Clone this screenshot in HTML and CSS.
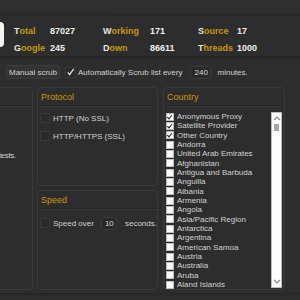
FILE: index.html
```html
<!DOCTYPE html>
<html>
<head>
<meta charset="utf-8">
<link rel="stylesheet" href="styles.css">
</head>
<body>
<div class="app">
  <div class="topbar"><div class="tabline"></div></div>
  <div class="stats">
    <div class="logo"></div>
    <div class="grid">
      <span class="lbl"><b>T</b>otal</span><span class="val">87027</span>
      <span class="lbl"><b>W</b>orking</span><span class="val">171</span>
      <span class="lbl"><b>S</b>ource</span><span class="val">17</span>
      <span class="lbl"><b>G</b>oogle</span><span class="val">245</span>
      <span class="lbl"><b>D</b>own</span><span class="val">86611</span>
      <span class="lbl"><b>T</b>hreads</span><span class="val">1000</span>
    </div>
  </div>
  <div class="toolbar">
    <button class="btn">Manual scrub</button>
    <span class="tcheck"><svg width="10" height="10" viewBox="0 0 10 10"><path d="M2 5.5 L4 8 L8.5 1.5" fill="none" stroke="#e8e8e8" stroke-width="1.3"/></svg></span>
    <span class="txt">Automatically Scrub list every</span>
    <span class="inp w240">240</span>
    <span class="txt">minutes.</span>
  </div>
  <div class="panels">
    <div class="panel leftp">
      <div class="phead"></div>
      <div class="lefttext">tests.</div>
    </div>
    <div class="midcol">
      <div class="panel proto">
        <div class="phead"><span class="title">Protocol</span></div>
        <div class="opt"><span class="dbox"></span><span>HTTP (No SSL)</span></div>
        <div class="opt"><span class="dbox"></span><span>HTTP/HTTPS (SSL)</span></div>
      </div>
      <div class="panel speed">
        <div class="phead"><span class="title">Speed</span></div>
        <div class="opt sopt"><span class="dbox"></span><span>Speed over</span><span class="inp w10">10</span><span>seconds.</span></div>
      </div>
    </div>
    <div class="panel country">
      <div class="phead"><span class="title">Country</span></div>
      <div class="listwrap">
        <ul class="list">
          <li><span class="wbox on"></span>Anonymous Proxy</li>
          <li><span class="wbox on"></span>Satellite Provider</li>
          <li><span class="wbox on"></span>Other Country</li>
          <li><span class="wbox"></span>Andorra</li>
          <li><span class="wbox"></span>United Arab Emirates</li>
          <li><span class="wbox"></span>Afghanistan</li>
          <li><span class="wbox"></span>Antigua and Barbuda</li>
          <li><span class="wbox"></span>Anguilla</li>
          <li><span class="wbox"></span>Albania</li>
          <li><span class="wbox"></span>Armenia</li>
          <li><span class="wbox"></span>Angola</li>
          <li><span class="wbox"></span>Asia/Pacific Region</li>
          <li><span class="wbox"></span>Antarctica</li>
          <li><span class="wbox"></span>Argentina</li>
          <li><span class="wbox"></span>American Samoa</li>
          <li><span class="wbox"></span>Austria</li>
          <li><span class="wbox"></span>Australia</li>
          <li><span class="wbox"></span>Aruba</li>
          <li><span class="wbox"></span>Aland Islands</li>
        </ul>
        <div class="sbar">
          <div class="sbtn"><svg width="8" height="6" viewBox="0 0 8 6"><path d="M1 5 L4 2 L7 5" fill="none" stroke="#888" stroke-width="1.2"/></svg></div>
          <div class="strack"><div class="thumb"></div></div>
          <div class="sbtn"><svg width="8" height="6" viewBox="0 0 8 6"><path d="M1 1 L4 4 L7 1" fill="none" stroke="#888" stroke-width="1.2"/></svg></div>
        </div>
      </div>
    </div>
  </div>
  <div class="bottombar"></div>
</div>
</body>
</html>
```
FILE: styles.css
```css
* { box-sizing: border-box; }
html, body { margin: 0; padding: 0; }
body {
  width: 300px; height: 300px; overflow: hidden;
  background: #2d2d2d;
  font-family: "Liberation Sans", Arial, sans-serif;
  font-size: 8px;
  color: #d2d2d2;
}
.app { width: 300px; height: 300px; display: flex; flex-direction: column; }
.topbar {
  height: 16px; flex: none;
  border-top: 12px solid #2f2f2f;
  border-bottom: 1px solid #282828;
  background: #2b2b2b;
}
.tabline { margin-left: 110px; height: 1px; background: #262626; margin-top: 2px; }
.stats {
  height: 42px; flex: none;
  display: flex; align-items: flex-start;
  padding-top: 6px;
  border-bottom: 2px solid #262626;
}
.logo {
  width: 24px; height: 25px; margin-left: -20px;
  background: #f4f4f4; border-radius: 4px; flex: none;
}
.grid {
  display: grid;
  grid-template-columns: 36px 53px 47px 48px 39px 40px;
  grid-auto-rows: 17px;
  margin-left: 10px;
  font-weight: bold; font-size: 9px;
  align-items: center;
}
.lbl { color: #c8980e; }
.lbl b { color: #e6e6e6; }
.val { color: #f0f0f0; }
.toolbar {
  height: 29px; flex: none;
  display: flex; align-items: center;
  padding-left: 6px; padding-bottom: 1px;
}
.btn {
  font: inherit; color: #d2d2d2; white-space: nowrap;
  background: #333; border: 1px solid #3c3c3c; border-radius: 2px;
  height: 14px; width: 54px; padding: 0; margin: 0;
  display: flex; align-items: center; justify-content: center;
}
.tcheck {
  width: 11px; height: 11px; margin-left: 5px; margin-right: 2px;
  display: flex; align-items: center; justify-content: center;
  background: #2a2a2a; border: 1px solid #383838;
}
.txt { white-space: nowrap; }
.inp {
  display: inline-flex; align-items: center;
  background: #292929; border: 1px solid #3a3a3a; border-radius: 2px;
  height: 13px; color: #d8d8d8; padding-left: 3px;
}
.w240 { width: 21px; margin: 0 6px 0 8px; }
.panels {
  display: flex; height: 203px; flex: none;
}
.panel {
  border: 1px solid #3a3a3a; border-radius: 4px;
  background: #2d2d2d;
  overflow: hidden;
}
.phead {
  height: 18px; flex: none;
  border-bottom: 1px solid #252525;
  box-shadow: 0 1px 0 #363636;
  display: flex; align-items: center; padding-left: 3px;
}
.title { color: #c8980e; font-size: 9px; }
.leftp { width: 133px; margin-left: -100px; flex: none; }
.lefttext {
  text-align: right; white-space: nowrap; padding-right: 16px; margin-top: 45px;
  letter-spacing: -0.3px;
}
.midcol { width: 121px; margin-left: 4px; flex: none; display: flex; flex-direction: column; gap: 4px; }
.proto { height: 99px; flex: none; }
.speed { flex: 1; }
.opt {
  display: flex; align-items: center; gap: 3px;
  height: 12px; margin: 6px 0 0 2px;
  white-space: nowrap;
}
.sopt { margin-top: 8px; }
.dbox {
  width: 10px; height: 10px; flex: none;
  background: #2a2a2a; border: 1px solid #393939; border-radius: 1px;
}
.w10 { width: 18px; margin: 0 5px 0 4px; }
.country { width: 122px; margin-left: 5px; flex: none; display: flex; flex-direction: column; }
.listwrap { display: flex; padding: 6px 0 0 2px; flex: 1; }
.list {
  list-style: none; margin: 0; padding: 0; flex: 1;
}
.list li {
  height: 9.33px; display: flex; align-items: center; gap: 3px;
  white-space: nowrap; font-size: 8px;
}
.wbox {
  width: 8px; height: 8px; flex: none; background: #fafafa; border: 1px solid #bbb;
  position: relative;
}
.wbox.on::after {
  content: ""; position: absolute; left: 1px; top: 0px; width: 2px; height: 4px;
  border: solid #222; border-width: 0 1.5px 1.5px 0; transform: rotate(40deg);
}
.sbar {
  width: 11px; flex: none; margin-right: 2px; height: 176px;
  background: #fdfdfd; border: 1px solid #bcbcbc;
  display: flex; flex-direction: column;
}
.sbtn { height: 10px; display: flex; align-items: center; justify-content: center; flex: none; }
.strack { flex: 1; }
.thumb { width: 5px; height: 7px; background: #a8a8a8; margin: 1px auto 0; }
.bottombar {
  flex: 1; border-top: 1px solid #262626; margin-top: 3px;
  box-shadow: inset 0 2px 0 #2a2a2a;
}
```
